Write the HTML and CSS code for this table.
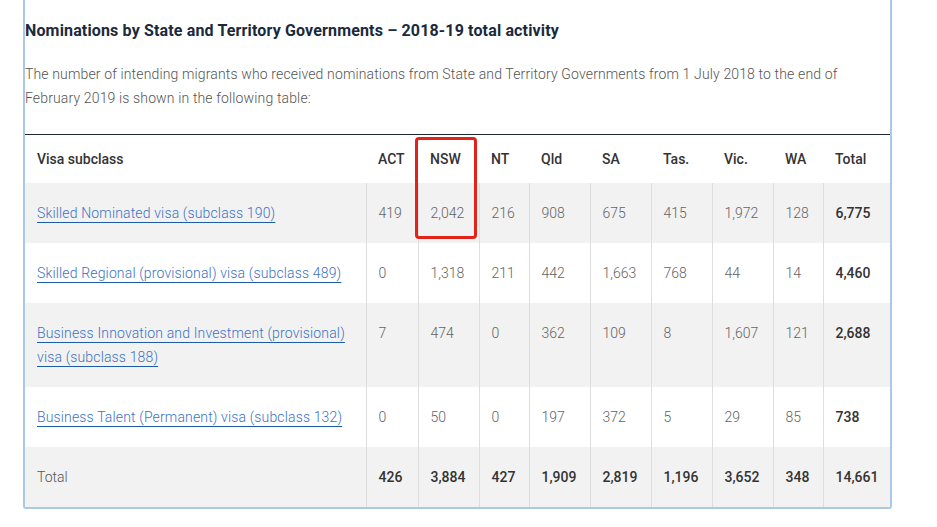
FILE: index.html
```html
<!DOCTYPE html>
<html lang="en">
<head>
<meta charset="utf-8">
<title>Nominations by State and Territory Governments</title>
<link rel="stylesheet" href="styles.css">
</head>
<body>
<div class="frame">
  <h2 class="title">Nominations by State and Territory Governments – 2018-19 total activity</h2>
  <p class="intro">The number of intending migrants who received nominations from State and Territory Governments from 1 July 2018 to the end of February 2019 is shown in the following table:</p>
  <table class="data">
    <colgroup>
      <col class="c-visa"><col class="c-52"><col class="c-61"><col class="c-50"><col class="c-61"><col class="c-61"><col class="c-61"><col class="c-61"><col class="c-50"><col class="c-total">
    </colgroup>
    <thead>
      <tr><th>Visa subclass</th><th>ACT</th><th>NSW</th><th>NT</th><th>Qld</th><th>SA</th><th>Tas.</th><th>Vic.</th><th>WA</th><th>Total</th></tr>
    </thead>
    <tbody>
      <tr><td><a href="#">Skilled Nominated visa (subclass 190)</a></td><td>419</td><td>2,042</td><td>216</td><td>908</td><td>675</td><td>415</td><td>1,972</td><td>128</td><td class="sum">6,775</td></tr>
      <tr><td><a href="#">Skilled Regional (provisional) visa (subclass 489)</a></td><td>0</td><td>1,318</td><td>211</td><td>442</td><td>1,663</td><td>768</td><td>44</td><td>14</td><td class="sum">4,460</td></tr>
      <tr><td><a href="#">Business Innovation and Investment (provisional) visa (subclass 188)</a></td><td>7</td><td>474</td><td>0</td><td>362</td><td>109</td><td>8</td><td>1,607</td><td>121</td><td class="sum">2,688</td></tr>
      <tr><td><a href="#">Business Talent (Permanent) visa (subclass 132)</a></td><td>0</td><td>50</td><td>0</td><td>197</td><td>372</td><td>5</td><td>29</td><td>85</td><td class="sum">738</td></tr>
      <tr class="totals"><td>Total</td><td class="sum">426</td><td class="sum">3,884</td><td class="sum">427</td><td class="sum">1,909</td><td class="sum">2,819</td><td class="sum">1,196</td><td class="sum">3,652</td><td class="sum">348</td><td class="sum">14,661</td></tr>
    </tbody>
  </table>
  <div class="highlight"></div>
</div>
</body>
</html>
```

FILE: styles.css
```css
html, body {
  margin: 0;
  padding: 0;
  background: #ffffff;
}

body {
  font-family: Roboto, "Liberation Sans", Arial, sans-serif;
  color: #555555;
}

.frame {
  position: relative;
  margin-left: 23px;
  width: 865px;
  border-left: 2px solid #aac8ea;
  border-right: 2px solid #aac8ea;
  border-bottom: 2px solid #aac8ea;
  border-bottom-left-radius: 3px;
  border-bottom-right-radius: 3px;
}

.title {
  margin: 0;
  padding-top: 21px;
  font-size: 16px;
  line-height: 20px;
  font-weight: 700;
  letter-spacing: 0.15px;
  color: #1a2a3c;
}

.intro {
  margin: 21px 0 0 0;
  font-size: 14px;
  line-height: 24px;
  font-weight: 300;
  letter-spacing: 0.14px;
  color: #555555;
}

.data {
  margin-top: 24px;
  width: 865px;
  table-layout: fixed;
  border-collapse: collapse;
  border-top: 1px solid #1d2a35;
  font-size: 14px;
  line-height: 24px;
}

.c-visa { width: 341px; }
.c-52 { width: 52px; }
.c-61 { width: 61px; }
.c-50 { width: 50px; }
.c-total { width: 67px; }

.data th {
  padding: 12px 0 12px 12px;
  text-align: left;
  font-weight: 500;
  color: #333333;
  background: #ffffff;
}

.data td {
  padding: 18px 8px 18px 12px;
  vertical-align: top;
  font-weight: 300;
  color: #646464;
}

.data tbody td + td {
  border-left: 1px solid #dedede;
}

.data tbody tr:nth-child(odd) td {
  background: #f2f2f2;
}

.data td.sum {
  font-weight: 500;
  color: #333333;
}

.data tr.totals td:first-child {
  color: #555555;
}

.data a {
  color: #3b72c4;
  letter-spacing: 0.15px;
  text-decoration: underline;
  text-decoration-color: #1d5ca8;
  text-decoration-thickness: 1px;
  text-underline-offset: 4px;
  text-decoration-skip-ink: none;
}

.highlight {
  position: absolute;
  left: 390px;
  top: 137px;
  width: 56px;
  height: 96px;
  border: 3px solid #e2231a;
  border-radius: 4px;
}
```
